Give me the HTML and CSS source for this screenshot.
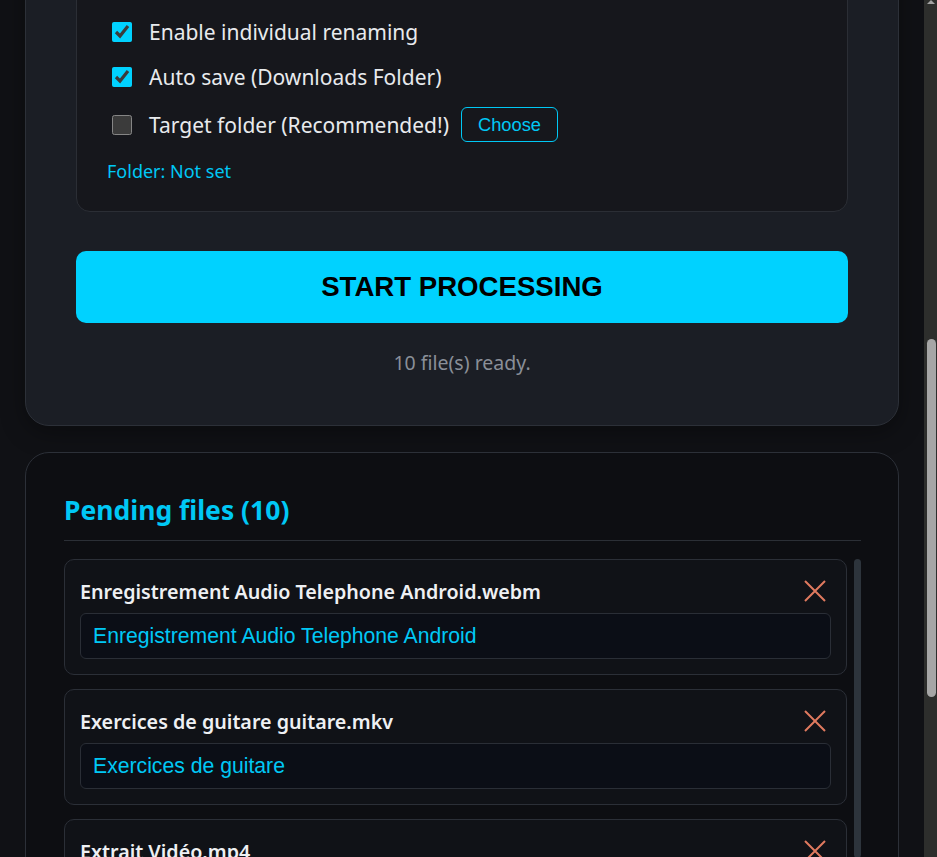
FILE: index.html
```html
<!DOCTYPE html>
<html lang="en">
<head>
    <meta charset="UTF-8">
    <meta name="viewport" content="width=device-width, initial-scale=1.0">
    <title>Batch Converter</title>
    <link rel="stylesheet" href="styles.css">
</head>
<body>
    <!-- Custom page scrollbar -->
    <div class="page-rail"><div class="page-thumb" id="pageThumb"></div></div>

    <div class="container">
        <header class="app-header">
            <h1>Batch Converter</h1>
            <p>Drop audio and video files, rename them and convert them in one go.</p>
        </header>

        <section class="card settings">
            <div class="dropzone">
                <p class="dropzone-title">Drag &amp; drop your files here</p>
                <p class="dropzone-hint">or click to browse (webm, mkv, mp4, wav...)</p>
            </div>

            <div class="field">
                <label for="format">Output format</label>
                <select id="format">
                    <option>MP3 (audio only)</option>
                    <option>MP4 (H.264)</option>
                    <option>WAV</option>
                </select>
            </div>
            <div class="field">
                <label for="quality">Quality</label>
                <select id="quality">
                    <option>High (320 kbps)</option>
                    <option>Medium (192 kbps)</option>
                    <option>Low (128 kbps)</option>
                </select>
            </div>

            <!-- Processing options -->
            <div class="options">
                <div class="option">
                    <label class="check"><input type="checkbox" checked> Enable individual renaming</label>
                </div>
                <div class="option">
                    <label class="check"><input type="checkbox" checked> Auto save (Downloads Folder)</label>
                </div>
                <div class="option">
                    <label class="check"><input type="checkbox"> Target folder (Recommended!)</label>
                    <button class="choose-btn">Choose</button>
                </div>
                <p class="folder-info">Folder: Not set</p>
            </div>

            <button class="start-btn">START PROCESSING</button>
            <p class="status" id="status"></p>
        </section>

        <section class="card queue">
            <h2 id="queueTitle">Pending files</h2>
            <div class="list-wrap">
                <div class="file-list" id="fileList"></div>
                <div class="list-thumb" id="listThumb"></div>
            </div>
        </section>
    </div>
    <script>
        const files = [
            { name: 'Enregistrement Audio Telephone Android.webm', rename: 'Enregistrement Audio Telephone Android' },
            { name: 'Exercices de guitare guitare.mkv', rename: 'Exercices de guitare' },
            { name: 'Extrait Vidéo.mp4', rename: 'Extrait Vidéo' },
            { name: 'Réunion projet 12-03.webm', rename: 'Réunion projet 12-03' },
            { name: 'Concert salle des fêtes.mp4', rename: 'Concert salle des fêtes' },
            { name: 'Podcast episode 4.wav', rename: 'Podcast episode 4' },
            { name: 'Mémo vocal.m4a', rename: 'Mémo vocal' },
            { name: 'Cours de piano.mkv', rename: 'Cours de piano' },
            { name: 'Interview radio.webm', rename: 'Interview radio' },
            { name: 'Vacances plage.mp4', rename: 'Vacances plage' }
        ];

        const crossIcon = '<svg width="22" height="22" viewBox="0 0 22 22"><path d="M1 1L21 21M21 1L1 21" stroke="#e07a5f" stroke-width="2" fill="none"/></svg>';

        function renderFiles() {
            const list = document.getElementById('fileList');
            list.innerHTML = '';
            files.forEach((file, i) => {
                const item = document.createElement('div');
                item.className = 'file-item';
                item.innerHTML =
                    '<div class="file-head">' +
                        '<span class="file-name"></span>' +
                        '<button class="remove-btn" title="Remove">' + crossIcon + '</button>' +
                    '</div>' +
                    '<input type="text" class="rename-input">';
                item.querySelector('.file-name').textContent = file.name;
                item.querySelector('.rename-input').value = file.rename;
                item.querySelector('.remove-btn').onclick = () => {
                    files.splice(i, 1);
                    renderFiles();
                };
                list.appendChild(item);
            });
            document.getElementById('queueTitle').textContent = `Pending files (${files.length})`;
            document.getElementById('status').textContent = `${files.length} file(s) ready.`;
            updateListThumb();
        }

        // scrollbar thumbs: size and offset follow the scroll position
        function updatePageThumb() {
            const thumb = document.getElementById('pageThumb');
            const docH = document.documentElement.scrollHeight;
            const viewH = window.innerHeight;
            thumb.style.height = (viewH / docH * viewH) + 'px';
            thumb.style.top = (window.scrollY / docH * viewH) + 'px';
        }

        function updateListThumb() {
            const list = document.getElementById('fileList');
            const thumb = document.getElementById('listThumb');
            const ratio = list.clientHeight / list.scrollHeight;
            thumb.style.display = ratio < 1 ? 'block' : 'none';
            thumb.style.height = (ratio * list.clientHeight) + 'px';
            thumb.style.top = (list.scrollTop * ratio) + 'px';
        }

        document.getElementById('fileList').addEventListener('scroll', updateListThumb);
        window.addEventListener('scroll', updatePageThumb);
        window.addEventListener('resize', updatePageThumb);

        renderFiles();

        // keep the options and the queue in view
        const settings = document.querySelector('.settings');
        window.scrollTo(0, settings.getBoundingClientRect().bottom + window.scrollY - 426);
        updatePageThumb();
    </script>
</body>
</html>
```

FILE: styles.css
```css
* {
    margin: 0;
    padding: 0;
    box-sizing: border-box;
}

html {
    color-scheme: dark;
    scrollbar-width: none;
}

body {
    font-family: "Noto Sans", "Open Sans", sans-serif;
    background: #101115;
    color: #e8eaed;
    margin-right: 13px;
}

/* Page scrollbar */
.page-rail {
    position: fixed;
    top: 0;
    right: 0;
    width: 13px;
    height: 100vh;
    background: #2d2e2c;
}

.page-rail::before {
    content: "";
    position: absolute;
    top: 0;
    left: 3px;
    border-left: 4px solid transparent;
    border-right: 4px solid transparent;
    border-bottom: 4px solid #a3a3a3;
}

.page-thumb {
    position: absolute;
    left: 3px;
    width: 9px;
    background: #a6a6a6;
    border-radius: 5px;
}

.container {
    padding: 25px;
}

.app-header {
    padding: 60px 0 40px;
    text-align: center;
}

.app-header h1 {
    color: #00c8f5;
    font-size: 36px;
}

.app-header p {
    color: #8a8f98;
    font-size: 18px;
    margin-top: 8px;
}

.card {
    background: #1b1e25;
    border: 1px solid #2c3038;
    border-radius: 24px;
    padding: 50px;
}

.settings {
    box-shadow: 0 6px 24px rgba(0, 0, 0, 0.35);
}

/* Upload area */
.dropzone {
    border: 2px dashed #3a3f49;
    border-radius: 14px;
    padding: 116px 20px;
    text-align: center;
}

.dropzone-title {
    font-size: 22px;
    font-weight: 600;
}

.dropzone-hint {
    color: #8a8f98;
    margin-top: 6px;
}

.field {
    margin: 30px 0;
    display: flex;
    flex-direction: column;
    gap: 10px;
    font-size: 18px;
}

.field select {
    height: 44px;
    padding: 0 12px;
    background: #0b0e16;
    color: #e8eaed;
    border: 1px solid #2a2e36;
    border-radius: 6px;
    font-size: 17px;
}

/* Options box */
.options {
    background: #16171c;
    border: 1px solid #2b2e35;
    border-radius: 14px;
    padding: 30px 30px 26px;
    display: flex;
    flex-direction: column;
    gap: 15px;
}

.option {
    display: flex;
    align-items: center;
    gap: 12px;
    min-height: 30px;
}

.check {
    display: flex;
    align-items: center;
    gap: 12px;
    font-size: 21px;
    line-height: 30px;
    cursor: pointer;
}

.check input {
    width: 20px;
    height: 20px;
    margin: 0 5px;
    accent-color: #00d2ff;
}

.choose-btn {
    height: 35px;
    padding: 0 16px;
    background: transparent;
    color: #00c8f5;
    border: 1px solid #00c8f5;
    border-radius: 6px;
    font-family: "Liberation Sans", Arial, sans-serif;
    font-size: 18.3px;
    cursor: pointer;
}

.folder-info {
    color: #00c8f5;
    font-size: 18px;
    line-height: 28px;
}

.start-btn {
    display: block;
    width: 100%;
    height: 72px;
    margin-top: 39px;
    background: #00d2ff;
    color: #000;
    border: none;
    border-radius: 10px;
    font-family: "Liberation Sans", Arial, sans-serif;
    font-size: 27.6px;
    font-weight: bold;
    cursor: pointer;
}

.status {
    margin-top: 27px;
    text-align: center;
    color: #8a8f98;
    font-size: 19.5px;
    line-height: 25px;
}

/* File queue */
.queue {
    margin-top: 26px;
    background: #0d0e12;
    padding: 40px 37px 36px 38px;
}

.queue h2 {
    color: #00c8f5;
    font-size: 26.5px;
    line-height: 35px;
    font-weight: 700;
    padding-bottom: 12px;
    border-bottom: 1px solid #2b2f36;
}

.list-wrap {
    position: relative;
    margin-top: 18px;
}

.file-list {
    max-height: 620px;
    overflow-y: auto;
    scrollbar-width: none;
    padding-right: 14px;
    display: flex;
    flex-direction: column;
    gap: 14px;
}

.list-thumb {
    position: absolute;
    right: 0;
    width: 7px;
    background: #2d343c;
    border-radius: 4px;
}

.file-item {
    flex-shrink: 0;
    background: #101217;
    border: 1px solid #2b2f37;
    border-radius: 10px;
    padding: 15px;
}

.file-head {
    display: flex;
    align-items: center;
    justify-content: space-between;
    height: 32px;
    margin-bottom: 6px;
}

.file-name {
    font-size: 19.7px;
    font-weight: 600;
    color: #eef0f3;
}

.remove-btn {
    width: 32px;
    height: 32px;
    display: flex;
    align-items: center;
    justify-content: center;
    background: none;
    border: none;
    cursor: pointer;
}

.rename-input {
    width: 100%;
    height: 46px;
    padding: 0 12px;
    background: #0b0e16;
    color: #00c8f5;
    border: 1px solid #2a2e36;
    border-radius: 6px;
    font-family: "Liberation Sans", Arial, sans-serif;
    font-size: 21.2px;
    outline: none;
}
```
